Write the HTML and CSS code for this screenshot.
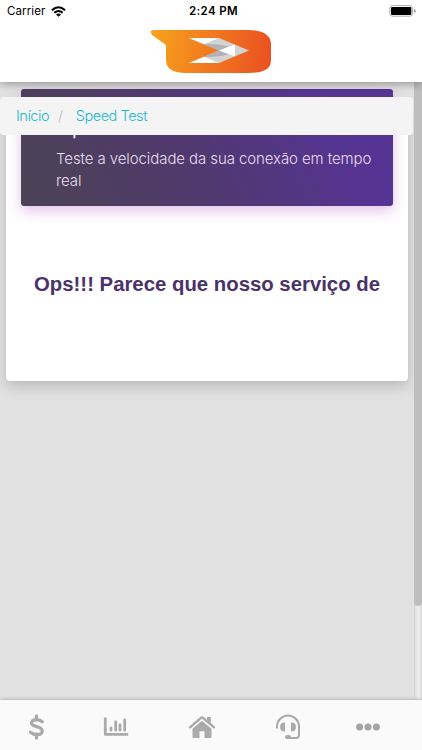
FILE: index.html
```html
<!DOCTYPE html>
<html lang="pt-BR">
<head>
<meta charset="utf-8">
<title>Speed Test</title>
<link rel="stylesheet" href="styles.css">
</head>
<body>
<div class="app">
  <header class="header">
    <div class="status">
      <div class="carrier"><span>Carrier</span>
        <svg class="wifi" width="15" height="11" viewBox="0 0 15 11"><g fill="none" stroke="#000" stroke-width="2"><path d="M.9 4.2Q7.5-1.8 14.1 4.2"/><path d="M3.3 6.8Q7.5 3.1 11.7 6.8"/></g><path d="M5 8.5Q7.5 6.6 10 8.5L7.5 10.8Z"/></svg>
      </div>
      <div class="time">2:24 PM</div>
      <svg class="battery" width="28" height="12" viewBox="0 0 28 12"><rect x=".8" y=".6" width="22.6" height="10.6" rx="2.6" fill="#fff" stroke="#aaa" stroke-width="1"/><rect x="2" y="1.9" width="20.3" height="8" rx="1.2"/><path d="M24.8 4Q26.8 4.6 26.8 6T24.8 8Z" fill="#999"/></svg>
    </div>
    <svg class="logo" width="122" height="45" viewBox="0 0 122 45">
      <defs><linearGradient id="brand" x1="0" y1="0" x2="1" y2=".05"><stop offset="0" stop-color="#f6a51b"/><stop offset=".5" stop-color="#f27a20"/><stop offset="1" stop-color="#ea5320"/></linearGradient></defs>
      <path d="M4 1H98C114 1 121 7 121 15V31C121 40 114 44 98 44H36C22 44 16 39 16 31V16L2 6Q-1 1 4 1Z" fill="url(#brand)"/>
      <path d="M39 9H69L99 21.5 69 34H39L69 21.5Z" fill="#d3d3d5"/>
      <path d="M39 9H69L54 15.3ZM39 34H69L54 27.8Z" fill="#fff"/>
      <path d="M54 15.3Q66 14 79 17.6L69 21.5ZM54 27.8L69 21.5 79 25.3Q66 29 54 27.8Z" fill="#b2b2b4"/>
      <path d="M69 21.5L85 15.5V27.5Z" fill="#fff"/>
    </svg>
  </header>
  <main class="content">
    <nav class="breadcrumb"><a>Início</a><span class="slash">/</span><a>Speed Test</a></nav>
    <section class="card">
      <div class="banner">
        <h1>Speed Test</h1>
        <p>Teste a velocidade da sua conexão em tempo<br>real</p>
      </div>
      <h2>Ops!!! Parece que nosso serviço de</h2>
    </section>
    <div class="scrollbar"><div class="thumb"></div></div>
  </main>
  <footer class="tabs">
    <svg class="dollar" width="16" height="26" viewBox="0 0 16 26"><path d="M13.2 7.8C11.5 6.4 9.5 5.7 7.3 5.7C4.4 5.7 2.5 7 2.5 9C2.5 11.2 4.7 11.9 7.7 12.7C11 13.6 13.2 14.5 13.2 17C13.2 19.4 11.1 20.7 8 20.7C5.3 20.7 3.1 19.8 1.3 18.3M7.5 2V6M7.5 20V24" fill="none" stroke="#aaa" stroke-width="3.3" stroke-linecap="round"/></svg>
    <svg class="chart" width="26" height="20" viewBox="0 0 26 20"><path d="M2.3 1.8V17.3H23.8" fill="none" stroke="#aaa" stroke-width="2.8" stroke-linecap="square" stroke-linejoin="round"/><path d="M8 11V13.2M12.7 4.8V13.2M17 8V13.2M21.7 3V13.2" stroke="#aaa" stroke-width="2.8" stroke-linecap="round"/></svg>
    <svg class="home" width="28" height="24" viewBox="0 0 28 24"><path d="M2 12.3L13 2.8Q14 2 15 2.8L26 12.3" fill="none" stroke="#aaa" stroke-width="2.4" stroke-linecap="round"/><path d="M19 2H22.8V9.3L19 6ZM4.5 13.7L14 5.7 23.5 13.7V21.7Q23.5 23 22.3 23H16.5V16.2H11.5V23H5.7Q4.5 23 4.5 21.7Z" fill="#aaa"/></svg>
    <svg class="support" width="26" height="26" viewBox="0 0 26 26"><path d="M2 13.8V12.5A11 11 0 0 1 24 12.5V21Q24 24 21 24H13" fill="none" stroke="#aaa" stroke-width="2" stroke-linecap="round"/><path d="M9.5 9V17H8.5Q5.5 17 5.5 13T8.5 9ZM16.5 9V17H17.5Q20.5 17 20.5 13T17.5 9Z" fill="#aaa" stroke="#aaa" stroke-linejoin="round"/><rect x="10" y="21" width="6" height="4" rx="2" fill="#aaa"/></svg>
    <svg class="more" width="26" height="10" viewBox="0 0 26 10"><g fill="#a4a4a4"><circle cx="4.6" cy="5" r="3.5"/><circle cx="13" cy="5" r="3.5"/><circle cx="21.4" cy="5" r="3.5"/></g></svg>
  </footer>
</div>
</body>
</html>
```
FILE: styles.css
```css
* { box-sizing: border-box; }
body { margin: 0; font-family: Inter, "Liberation Sans", sans-serif; }
svg { display: block; }
.app { width: 422px; height: 750px; display: grid; grid-template-rows: 82px 618px 50px; overflow: hidden; }
.header { background: #fff; position: relative; z-index: 2; box-shadow: 0 2px 8px rgba(0,0,0,.32); }
.status { height: 22px; padding: 0 5px 0 7px; display: grid; grid-template-columns: 1fr auto 1fr; align-items: center; font-size: 11.5px; }
.carrier { display: flex; gap: 6px; align-items: center; letter-spacing: .1px; }
.time { font-weight: 600; letter-spacing: .35px; padding-left: 3px; }
.battery { justify-self: end; }
.logo { margin: 7px 0 0 150px; }
.content { position: relative; background: #e1e1e1; display: grid; grid-template-columns: 414px 8px; }
.card { margin: 27px 0 0 6px; width: 402px; height: 272px; padding: 0 15px; background: #fff; border-radius: 4px; box-shadow: 0 5px 14px rgba(0,0,0,.18); }
.banner { margin-top: -20px; height: 117px; padding: 22px 0 0 35px; border-radius: 3px; color: #fff; background: linear-gradient(63deg, #4c4354 0%, #50396e 44%, #553492 82%, #573394 100%); box-shadow: 0 5px 14px rgba(156,39,176,.28); }
h1 { margin: 0; font-weight: 300; font-size: 24.5px; line-height: 26px; }
p { margin: 11px 0 0; font-weight: 300; font-size: 15px; line-height: 22px; letter-spacing: -.09px; white-space: nowrap; color: #e6dfed; }
h2 { margin: 64px -15px 0; text-align: center; white-space: nowrap; font: bold 20.35px/28px "Liberation Sans", sans-serif; color: #4b3269; }
.breadcrumb { position: absolute; left: 0; top: 15px; width: 413px; height: 38px; padding: 0 0 2px 16px; background: #f4f4f4; border-radius: 4px; display: flex; align-items: center; font-weight: 300; font-size: 14.5px; letter-spacing: -.45px; color: #20b9d0; }
.slash { color: #bbb; margin: 0 13px 0 9px; }
.scrollbar { background: linear-gradient(90deg, #d4d4d4, #ebebeb 40%, #ebebeb 70%, #d4d4d4); border-radius: 0 0 4px 4px; height: 617px; }
.thumb { height: 524px; background: #bebebe; border-radius: 0 0 4px 4px; }
.tabs { position: relative; background: #fafafa; box-shadow: 0 -1px 3px rgba(0,0,0,.2); display: grid; grid-template-columns: 74px 84px 88px 84px 76px; align-items: center; justify-items: center; padding-top: 3px; }
```
